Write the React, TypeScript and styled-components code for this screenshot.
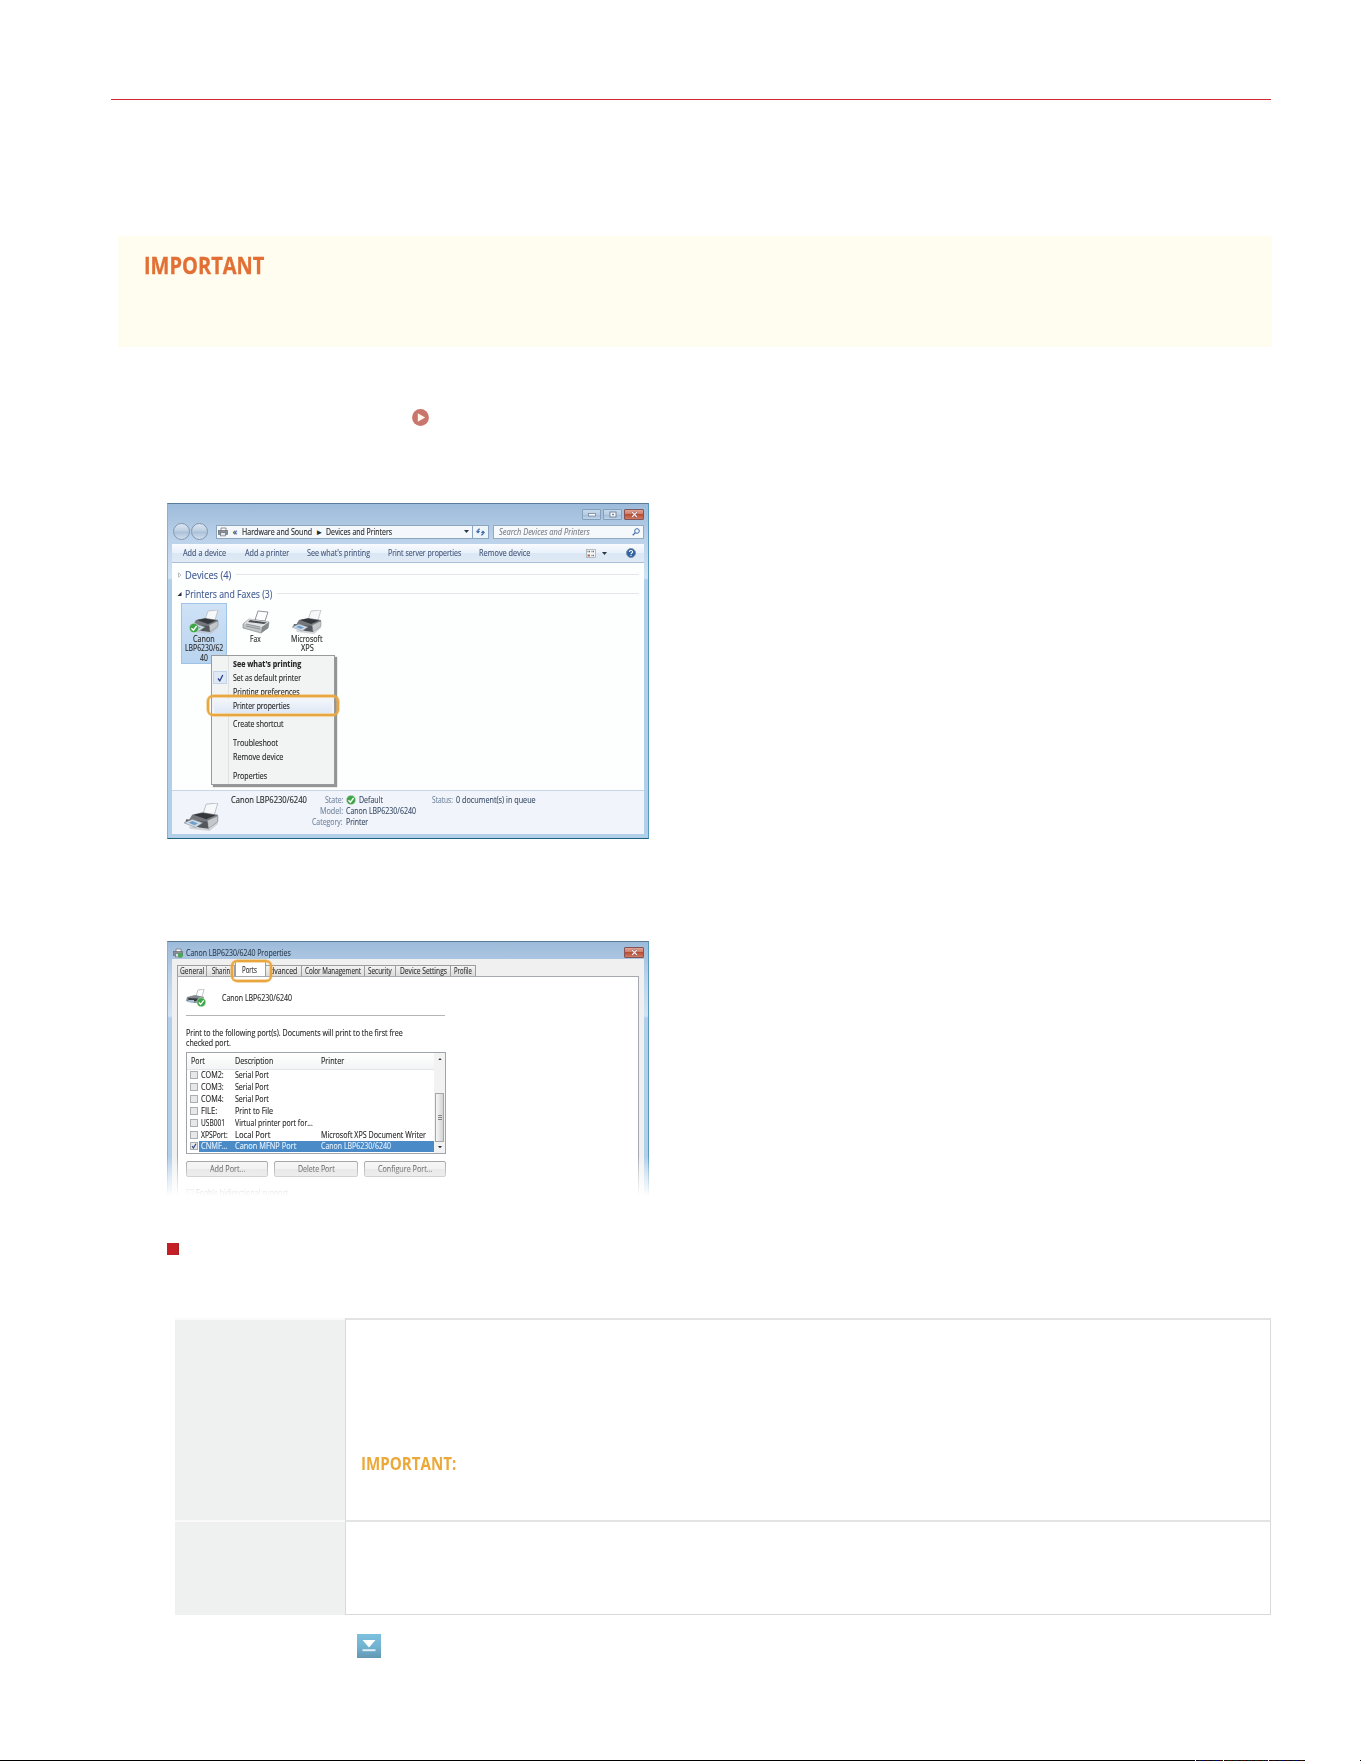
import { useLayoutEffect, useRef, useState } from "react";
import type { ReactNode } from "react";
import styled, { createGlobalStyle } from "styled-components";

const GlobalStyle = createGlobalStyle`
  *, *::before, *::after {
    box-sizing: border-box;
  }
  body {
    margin: 0;
    background: #fff;
    font-family: "Open Sans", "Noto Sans", sans-serif;
  }
  svg {
    display: block;
    flex-shrink: 0;
  }
`;

/* Text condensed to a given width, as the dialog font is narrower than ours */
const FitBox = styled.span<{ $w: number }>`
  display: block;
  flex-shrink: 0;
  width: ${(props) => props.$w}px;
  white-space: nowrap;
`;
const FitInner = styled.span`
  display: inline-block;
  vertical-align: top;
  transform-origin: 0 50%;
`;

function Fit({ w, children }: { w: number; children: ReactNode }) {
  const ref = useRef<HTMLSpanElement>(null);
  const [scale, setScale] = useState(1);

  useLayoutEffect(() => {
    if (ref.current) setScale(w / ref.current.offsetWidth);
  }, [w]);

  return (
    <FitBox $w={w}>
      <FitInner ref={ref} style={{ transform: `scaleX(${scale})` }}>
        {children}
      </FitInner>
    </FitBox>
  );
}

/* ---------- page ---------- */
const Page = styled.main`
  display: flex;
  flex-direction: column;
  width: 1361px;
  height: 1761px;
  padding: 99px 89px 0 111px;
  overflow: hidden;
`;
const Rule = styled.hr`
  width: 1160px;
  height: 1px;
  margin: 0;
  border: 0;
  background: #cf2630;
  flex-shrink: 0;
`;
const ImportantBox = styled.section`
  height: 111px;
  margin: 136px 0 0 7px;
  padding: 19px 0 0 26px;
  background: #fffcf0;
  flex-shrink: 0;
`;
const ImportantTitle = styled.h2`
  margin: 0;
  font-size: 22.5px;
  line-height: 22px;
  font-weight: 700;
  color: #e27035;
  -webkit-text-stroke: 0.3px currentColor;
`;
const PlayLink = styled.div`
  margin: 62px 0 0 301px;
  height: 17px;
  flex-shrink: 0;
`;
const SquareMark = styled.div`
  width: 12px;
  height: 12px;
  margin: 47px 0 0 56px;
  background: #c41f26;
  border-right: 1px solid #a32027;
  flex-shrink: 0;
`;
const SpecTable = styled.section`
  display: grid;
  grid-template-columns: 170px 927px;
  grid-template-rows: 202px 95px;
  margin: 63px 0 0 64px;
  flex-shrink: 0;
`;
const SpecHead = styled.div`
  background: #eff1f0;
  border-top: 2px solid #fafafa;
`;
const SpecCell = styled.div<{ $last?: boolean }>`
  padding: ${(props) => (props.$last ? 0 : "133px 0 0 15px")};
  border: 1px solid #d9d9d9;
  border-top: 2px solid #e3e3e3;
  border-bottom-width: ${(props) => (props.$last ? 1 : 0)}px;
  margin-right: 1px;
`;
const SpecNote = styled.strong`
  display: block;
  font-size: 17.5px;
  line-height: 20px;
  color: #eba93a;
`;
const JumpIcon = styled.div`
  display: flex;
  align-items: center;
  justify-content: center;
  width: 24px;
  height: 24px;
  margin: 19px 0 0 246px;
  background: linear-gradient(#7cc0df, #72b4d2 50%, #6398b4);
  flex-shrink: 0;
`;
const PageEdge = styled.div`
  height: 1px;
  margin: 102px -89px 0 -111px;
  background:
    linear-gradient(#000, #000) 0 0 / 1195px 1px no-repeat,
    repeating-linear-gradient(90deg, #102 0 3px, #500 3px 4px, #020 4px 6px, #00a 6px 7px) 1196px 0 / 27px 1px no-repeat,
    repeating-linear-gradient(90deg, #200 0 3px, #030 3px 5px, #004 5px 6px, #700 6px 7px) 1224px 0 / 44px 1px no-repeat,
    repeating-linear-gradient(90deg, #102 0 3px, #500 3px 4px, #020 4px 6px, #00a 6px 7px) 1269px 0 / 36px 1px no-repeat,
    linear-gradient(#000, #000) 1360px 0 / 1px 1px no-repeat;
  flex-shrink: 0;
`;

/* ---------- window frame ---------- */
const Window = styled.section<{ $height: number; $top: number; $faded?: boolean }>`
  position: relative;
  display: flex;
  flex-direction: column;
  width: 482px;
  height: ${(props) => props.$height}px;
  margin: ${(props) => props.$top}px 0 0 56px;
  padding: 0 4px 4px;
  background: linear-gradient(#9dbbda 0, #bad1ea 34px, #d2e3f4 74px, #b1cfe9 76px);
  border: 1px solid #8fb0cb;
  border-top-color: #5b7c99;
  border-right-color: #559bc0;
  border-bottom: ${(props) => (props.$faded ? "0" : "1px solid #1e607e")};
  font-size: 8.5px;
  line-height: 10px;
  color: #262626;
  -webkit-text-stroke: 0.12px currentColor;
  flex-shrink: 0;
  ${(props) =>
    props.$faded &&
    "mask-image: linear-gradient(#000 215px, rgba(0,0,0,.5) 232px, transparent 255px);"}
`;
const CaptionBar = styled.header<{ $height: number }>`
  display: flex;
  align-items: flex-start;
  gap: 2px;
  height: ${(props) => props.$height}px;
  padding-top: 5px;
  flex-shrink: 0;
`;
const CaptionTitle = styled.div`
  display: flex;
  align-items: center;
  gap: 3px;
  height: 10px;
  margin: 1px auto 0 1px;
  font-size: 9px;
  color: #2b3d50;
`;
const CaptionButton = styled.span<{ $close?: boolean }>`
  display: flex;
  align-items: center;
  justify-content: center;
  width: ${(props) => (props.$close ? 20 : 19)}px;
  height: 11px;
  border: 1px solid ${(props) => (props.$close ? "#81555a" : "#849fba")};
  border-radius: 1px;
  background: ${(props) =>
    props.$close
      ? "linear-gradient(#dfa292, #d17d68 45%, #bb4d35 50%, #cf7a62)"
      : "linear-gradient(#c7d9ec, #b6cce3 50%, #a3bcd8 55%, #bfd4ea)"};

  &:first-of-type {
    margin-left: auto;
  }
`;

/* ---------- devices window ---------- */
const NavRow = styled.div`
  display: flex;
  align-items: center;
  height: 13px;
  margin-bottom: 6px;
  padding-left: 1px;
  flex-shrink: 0;
`;
const RoundButton = styled.span`
  width: 17px;
  height: 17px;
  margin-right: 1px;
  border: 1px solid #8298af;
  border-radius: 50%;
  background: linear-gradient(#dce7f2, #bccee1 48%, #a9bfd7 52%, #cfe0ef);
  flex-shrink: 0;
`;
const Address = styled.div`
  display: flex;
  align-items: center;
  width: 257px;
  height: 14px;
  margin-left: 7px;
  padding-left: 1px;
  background: #f4f8fc;
  border: 1px solid #8ca4bc;

  svg:last-child {
    margin-left: auto;
    margin-right: 3px;
  }
`;
const Chevron = styled.span`
  width: 14px;
  text-align: center;
  font-size: 9px;
`;
const Refresh = styled.div`
  display: flex;
  align-items: center;
  justify-content: center;
  width: 17px;
  height: 14px;
  margin-left: -1px;
  background: #edf4fa;
  border: 1px solid #8ca4bc;
`;
const Search = styled.div`
  display: flex;
  align-items: center;
  justify-content: space-between;
  flex: 1;
  height: 14px;
  margin-left: 4px;
  padding: 0 3px 0 5px;
  background: #f6f9fc;
  border: 1px solid #94aac1;
  color: #7b8088;
  font-style: italic;
`;
const Toolbar = styled.div`
  display: flex;
  align-items: center;
  height: 19px;
  padding: 0 8px 0 11px;
  background: linear-gradient(#f9fbfe, #e9f1fa 48%, #dbe7f4 52%, #dfeaf6);
  border-bottom: 1px solid #a9bfd6;
  color: #43567a;
  flex-shrink: 0;
`;
const ToolGap = styled.span<{ $w: number }>`
  width: ${(props) => props.$w}px;
  flex-shrink: 0;
`;
const HelpIcon = styled.span`
  margin-left: auto;
`;
const Body = styled.div`
  flex: 1;
  padding: 2px 5px 0 5px;
  background: #fdfefe;
`;
const GroupTitle = styled.div`
  display: flex;
  align-items: center;
  height: 19px;
  font-size: 10.5px;
  line-height: 14px;
  color: #405a92;

  svg {
    margin-right: 3px;
  }
  &::after {
    content: "";
    flex: 1;
    height: 1px;
    margin-left: 5px;
    background: #e2e6ea;
  }
`;
const Devices = styled.div`
  display: flex;
  gap: 5.5px;
  margin-left: 4px;
`;
const Device = styled.div<{ $selected?: boolean }>`
  display: flex;
  flex-direction: column;
  align-items: center;
  width: 46px;
  height: 61px;
  padding-top: 6px;
  line-height: 9.3px;
  border: 1px solid ${(props) => (props.$selected ? "#9fc3e6" : "transparent")};
  background: ${(props) => (props.$selected ? "linear-gradient(#cfe2f6, #b9d4ef)" : "none")};

  svg {
    margin-bottom: -1px;
  }
`;
const StatusBar = styled.footer`
  display: flex;
  height: 44px;
  padding: 4px 0 0 12px;
  border-top: 1px solid #c8d5e4;
  background: #f1f5fb;
  color: #3a4c66;
  flex-shrink: 0;
`;
const StatusIcon = styled.div`
  width: 47px;
  padding-top: 8px;
`;
const StatusName = styled.div`
  width: 76px;
  color: #262626;
`;
const StatusLabels = styled.div`
  display: flex;
  flex-direction: column;
  align-items: flex-end;
  gap: 1px;
  width: 36px;
  color: #7386a0;
`;
const StatusValues = styled.div`
  display: flex;
  flex-direction: column;
  gap: 1px;
  width: 86px;
  margin-left: 3px;
`;
const StatusPair = styled.div`
  display: flex;
  gap: 3px;
  height: 10px;
`;
const Muted = styled.span`
  color: #7386a0;
`;

const Menu = styled.div`
  position: absolute;
  left: 43px;
  top: 151px;
  width: 124px;
  height: 130px;
  padding: 1px 2px;
  background: linear-gradient(90deg, transparent 16px, #dfe1e3 16px 17px, transparent 17px) #f2f3f3;
  border: 1px solid #9a9a9a;
  box-shadow: 2px 2px 1px rgba(60, 60, 60, 0.55);
  color: #222;
`;
const MenuItem = styled.div<{ $bold?: boolean; $gap?: boolean; $active?: boolean }>`
  display: flex;
  align-items: center;
  height: 13.9px;
  margin-top: ${(props) => (props.$gap ? 4.9 : 0)}px;
  padding-left: 19px;
  font-weight: ${(props) => (props.$bold ? 700 : 400)};
  background: ${(props) => (props.$active ? "linear-gradient(#f3f6fb, #dfe8f5)" : "none")};
  border-radius: 2px;
`;
const MenuCheck = styled.span`
  display: flex;
  align-items: center;
  justify-content: center;
  width: 14px;
  height: 13px;
  margin: 0 6px 0 -20px;
  background: #dfe9f5;
  border: 1px solid #c3d4e8;
`;
const Highlight = styled.span<{ $x: number; $y: number; $w: number; $h: number }>`
  position: absolute;
  left: ${(props) => props.$x}px;
  top: ${(props) => props.$y}px;
  width: ${(props) => props.$w}px;
  height: ${(props) => props.$h}px;
  border: 2px solid #e9a63f;
  border-radius: 6px;
  box-shadow: 0 0 0 0.5px #efb75c, inset 0 0 0 0.5px #efb75c;
`;

/* ---------- properties window ---------- */
const Client = styled.div`
  flex: 1;
  display: flex;
  flex-direction: column;
  padding: 5px 5px 0;
  background: #f0f0f0;
`;
const Tabs = styled.div`
  display: flex;
  align-items: flex-end;
  height: 12px;
  flex-shrink: 0;
`;
const Tab = styled.div<{ $w: number; $active?: boolean }>`
  display: flex;
  align-items: center;
  justify-content: center;
  width: ${(props) => props.$w}px;
  height: ${(props) => (props.$active ? 16 : 11)}px;
  margin-bottom: ${(props) => (props.$active ? -1 : 0)}px;
  padding-right: ${(props) => (props.$active ? 3 : 0)}px;
  border: 1px solid #9d9d9d;
  border-bottom: 0;
  border-left-width: ${(props) => (props.$active ? 1 : 0)}px;
  background: ${(props) => (props.$active ? "#fff" : "linear-gradient(#f3f3f3, #dcdcdc)")};
  color: #303030;
  overflow: hidden;

  &:first-child {
    border-left-width: 1px;
  }
`;
const TabPanel = styled.div`
  flex: 1;
  padding: 12px 8px 0;
  background: #fff;
  border: 1px solid #a5a9ae;
  border-bottom: 0;
`;
const PrinterName = styled.div`
  display: flex;
  align-items: center;
  gap: 16px;
  height: 18px;
`;
const PanelRule = styled.div`
  width: 259px;
  height: 1px;
  margin: 8px 0 12px;
  background: #b4b4b4;
`;
const PortList = styled.div`
  display: flex;
  width: 260px;
  height: 102px;
  margin-top: 4px;
  border: 1px solid #9fa4aa;
`;
const PortTable = styled.div`
  flex: 1;
`;
const PortRow = styled.div<{ $head?: boolean; $selected?: boolean }>`
  display: grid;
  grid-template-columns: ${(props) => (props.$head ? "44px 86px 1fr" : "11px 34px 86px 1fr")};
  align-items: center;
  height: ${(props) => (props.$head ? 16.5 : 11.85)}px;
  padding-left: ${(props) => (props.$head ? 4 : 3)}px;
  color: ${(props) => (props.$selected ? "#e4f0fb" : "#262626")};
  background: ${(props) => {
    if (props.$head) return "linear-gradient(#fff, #f3f4f5)";
    return props.$selected ? "linear-gradient(90deg, #fff 12px, #4a8ac6 12px)" : "none";
  }};
  border-bottom: ${(props) => (props.$head ? "1px solid #e3e5e8" : "0")};
`;
const Check = styled.span`
  display: flex;
  align-items: center;
  justify-content: center;
  width: 8px;
  height: 8px;
  border: 1px solid #aaadb1;
  background: #e6e8eb;
`;
const ScrollBar = styled.div`
  display: flex;
  flex-direction: column;
  align-items: center;
  justify-content: space-between;
  width: 11px;
  padding: 5px 0 5px;
  background: #f2f2f2;
`;
const ScrollThumb = styled.div`
  display: flex;
  align-items: center;
  justify-content: center;
  width: 9px;
  height: 49px;
  margin-top: auto;
  margin-bottom: 4px;
  border: 1px solid #a6a6a6;
  background: linear-gradient(90deg, #f6f6f6, #d3d4d5);
`;
const PortButtons = styled.div`
  display: grid;
  grid-template-columns: 82px 84px 82px;
  gap: 6px;
  margin-top: 7px;
`;
const PortButton = styled.div`
  display: flex;
  align-items: center;
  justify-content: center;
  height: 16px;
  border: 1px solid #969696;
  border-radius: 2px;
  background: linear-gradient(#f4f4f4, #ebebeb 50%, #dadada 52%, #d6d6d6);
`;
const Bidirectional = styled.div`
  display: flex;
  align-items: center;
  gap: 2px;
  margin-top: 11px;
`;

function Badge() {
  return (
    <g>
      <circle cx="5" cy="5" r="4.7" fill="#3fa548" stroke="#d8ead9" strokeWidth=".6" />
      <path d="M2.4 5.2 4.4 7.2 7.6 3" fill="none" stroke="#fff" strokeWidth="1.4" />
    </g>
  );
}

function PrinterIcon({ width = 30, checked = false }: { width?: number; checked?: boolean }) {
  return (
    <svg width={width} height={(width * 25) / 30} viewBox="0 0 30 25">
      <path d="M4 20 22 22 29 15 29 18 22 24 5 22z" fill="#b9bcc0" opacity=".6" />
      <path d="M16 10 19 1 29 0 26 10z" fill="#f7f8f9" stroke="#a7abb0" strokeWidth=".6" />
      <path d="M7 10 16 8 29 10 29 15 20 19 4 15z" fill="#74787d" />
      <path d="M8 10 16 8.5 27 10.5 19 14z" fill="#34383d" />
      <path d="M20 15 29 11 29 16 21 22z" fill="#c5c8ca" stroke="#7d8185" strokeWidth=".5" />
      <path d="M2 14 20 16 21 22 13 21 1 17z" fill="#54585d" />
      <path d="M0 17 7 14 16 17 10 21z" fill="#d2dbe4" stroke="#7d8894" strokeWidth=".5" />
      <path d="M4 17 7 15.5 12 17.5 9 19z" fill="#6fa0cb" />
      {checked && (
        <g transform="translate(0 13)">
          <Badge />
        </g>
      )}
    </svg>
  );
}

/* simplified printer for the 10px address and caption bars */
function SmallPrinterIcon({ checked = false }: { checked?: boolean }) {
  return (
    <svg width="10" height="10" viewBox="0 0 10 10">
      <path d="M3 4V1H8V4" fill="#fafbfc" stroke="#7f858c" strokeWidth=".9" />
      <rect x=".5" y="3.6" width="9" height="3.8" fill="#8a9097" stroke="#666c73" strokeWidth=".7" />
      <rect x="2.5" y="5.5" width="5" height="3.4" fill="#dfe6ed" stroke="#6d747b" strokeWidth=".7" />
      {checked && <circle cx="7.4" cy="7.2" r="2.5" fill="#4aa653" />}
    </svg>
  );
}

function FaxIcon() {
  return (
    <svg width="30" height="25" viewBox="0 0 30 25">
      <path d="M14 10 17 1 27 2 24 11z" fill="#fcfcfc" stroke="#777b80" strokeWidth=".8" />
      <path d="M2 14 8 9 28 12 27 18 20 23 2 18z" fill="#c1c4c6" stroke="#777a7e" strokeWidth=".6" />
      <path d="M8 9 28 12 21 17 3 14z" fill="#e0e2e3" />
      <path d="M9 10 26 12.5 23 14 7 12z" fill="#4c5055" />
      <path d="M5 14 19 17M5 16 19 19" stroke="#8b8e92" strokeWidth=".9" />
      <path d="M21 17 28 12 27 18 20 23z" fill="#85898c" />
    </svg>
  );
}

function CloseGlyph() {
  return (
    <svg width="7" height="7" viewBox="0 0 7 7">
      <path d="M1 1 6 6M6 1 1 6" stroke="#7b4a47" strokeWidth="2.4" />
      <path d="M1 1 6 6M6 1 1 6" stroke="#f5ebe9" strokeWidth="1.3" />
    </svg>
  );
}

function Arrow({ up = false, size = 5 }: { up?: boolean; size?: number }) {
  return (
    <svg width={size} height={size * 0.6} viewBox="0 0 5 3">
      <path d={up ? "M0 3 2.5 0 5 3z" : "M0 0 2.5 3 5 0z"} fill="#2d3540" />
    </svg>
  );
}

const ports = [
  { name: "COM2:", w: 23, kind: "Serial Port", kw: 34 },
  { name: "COM3:", w: 23, kind: "Serial Port", kw: 34 },
  { name: "COM4:", w: 23, kind: "Serial Port", kw: 34 },
  { name: "FILE:", w: 16, kind: "Print to File", kw: 38 },
  { name: "USB001", w: 24, kind: "Virtual printer port for...", kw: 78 },
  { name: "XPSPort:", w: 27, kind: "Local Port", kw: 35, printer: "Microsoft XPS Document Writer", pw: 105 },
  { name: "CNMF...", w: 27, kind: "Canon MFNP Port", kw: 61, printer: "Canon LBP6230/6240", pw: 70, checked: true },
];

function DevicesWindow() {
  return (
    <Window $height={336} $top={77}>
      <CaptionBar $height={21}>
        <CaptionButton>
          <svg width="8" height="4" viewBox="0 0 8 4">
            <rect x=".5" y=".5" width="7" height="2.5" fill="#fff" stroke="#71869d" strokeWidth=".8" />
          </svg>
        </CaptionButton>
        <CaptionButton>
          <svg width="8" height="7" viewBox="0 0 8 7">
            <rect x="1" y="1" width="6" height="5" fill="#fff" stroke="#71869d" />
            <rect x="3" y="2.7" width="2" height="1.6" fill="#71869d" />
          </svg>
        </CaptionButton>
        <CaptionButton $close>
          <CloseGlyph />
        </CaptionButton>
      </CaptionBar>
      <NavRow>
        <RoundButton />
        <RoundButton />
        <Address>
          <SmallPrinterIcon />
          <Chevron>«</Chevron>
          <Fit w={70}>Hardware and Sound</Fit>
          <Chevron>▸</Chevron>
          <Fit w={66}>Devices and Printers</Fit>
          <Arrow />
        </Address>
        <Refresh>
          <svg width="9" height="8" viewBox="0 0 9 8">
            <path d="M4 1C2 1 1.5 2.5 2 4.5M.5 3 2 4.6 3.5 3M5 7C7 7 7.5 5.5 7 3.5M5.5 5 7 3.4 8.5 5" fill="none" stroke="#3f6cab" strokeWidth="1.2" />
          </svg>
        </Refresh>
        <Search>
          <Fit w={91}>Search Devices and Printers</Fit>
          <svg width="8" height="8" viewBox="0 0 8 8">
            <circle cx="5" cy="3" r="2.3" fill="none" stroke="#3f6cab" />
            <path d="M3.4 4.6.7 7.3" stroke="#3f6cab" strokeWidth="1.3" />
          </svg>
        </Search>
      </NavRow>
      <Toolbar>
        <Fit w={43}>Add a device</Fit>
        <ToolGap $w={18.5} />
        <Fit w={44}>Add a printer</Fit>
        <ToolGap $w={18} />
        <Fit w={63}>See what's printing</Fit>
        <ToolGap $w={18} />
        <Fit w={73}>Print server properties</Fit>
        <ToolGap $w={18} />
        <Fit w={51}>Remove device</Fit>
        <ToolGap $w={56} />
        <svg width="10" height="9" viewBox="0 0 10 9">
          <rect x=".5" y=".5" width="9" height="8" fill="#f4f5f6" stroke="#9da5ad" strokeWidth=".7" />
          <path d="M1.5 2.5H4M5.5 2.5H8.5M5.5 6.5H8.5" stroke="#69737e" strokeWidth="1.6" strokeDasharray="1 .5" />
          <path d="M1.5 6.5H4" stroke="#b26a52" strokeWidth="2" />
        </svg>
        <ToolGap $w={6} />
        <Arrow />
        <HelpIcon>
          <svg width="10" height="10" viewBox="0 0 10 10">
            <circle cx="5" cy="5" r="4.5" fill="#2d62a4" stroke="#7c91aa" />
            <path d="M3.4 4C3.4 2 6.6 2 6.6 3.9 6.6 5 5 4.9 5 6.2M5 7V8" fill="none" stroke="#fff" strokeWidth="1.1" />
          </svg>
        </HelpIcon>
      </Toolbar>
      <Body>
        <GroupTitle>
          <svg width="5" height="6" viewBox="0 0 5 6">
            <path d="M1.5.8 4 3 1.5 5.2z" fill="#fff" stroke="#a1a5aa" strokeWidth=".7" />
          </svg>
          <Fit w={46}>Devices (4)</Fit>
        </GroupTitle>
        <GroupTitle>
          <svg width="5" height="6" viewBox="0 0 5 6">
            <path d="M4.5 1V5H.5z" fill="#252a30" />
          </svg>
          <Fit w={87}>Printers and Faxes (3)</Fit>
        </GroupTitle>
        <Devices>
          <Device $selected>
            <PrinterIcon checked />
            <Fit w={22}>Canon</Fit>
            <Fit w={38}>LBP6230/62</Fit>
            <Fit w={8}>40</Fit>
          </Device>
          <Device>
            <FaxIcon />
            <Fit w={11}>Fax</Fit>
          </Device>
          <Device>
            <PrinterIcon />
            <Fit w={32}>Microsoft</Fit>
            <Fit w={13}>XPS</Fit>
          </Device>
        </Devices>
      </Body>
      <StatusBar>
        <StatusIcon>
          <PrinterIcon width={35} />
        </StatusIcon>
        <StatusName>
          <Fit w={76}>Canon LBP6230/6240</Fit>
        </StatusName>
        <StatusLabels>
          <Fit w={18}>State:</Fit>
          <Fit w={23}>Model:</Fit>
          <Fit w={31}>Category:</Fit>
        </StatusLabels>
        <StatusValues>
          <StatusPair>
            <svg width="10" height="10" viewBox="0 0 10 10">
              <Badge />
            </svg>
            <Fit w={24}>Default</Fit>
          </StatusPair>
          <Fit w={70}>Canon LBP6230/6240</Fit>
          <Fit w={22}>Printer</Fit>
        </StatusValues>
        <StatusPair>
          <Muted>
            <Fit w={21}>Status:</Fit>
          </Muted>
          <Fit w={80}>0 document(s) in queue</Fit>
        </StatusPair>
      </StatusBar>
      <Menu>
        <MenuItem $bold>
          <Fit w={68}>See what's printing</Fit>
        </MenuItem>
        <MenuItem>
          <MenuCheck>
            <svg width="7" height="8" viewBox="0 0 7 8">
              <path d="M1 4.5 2.8 6.8 5.8 1" fill="none" stroke="#283f8a" strokeWidth="1.3" />
            </svg>
          </MenuCheck>
          <Fit w={68}>Set as default printer</Fit>
        </MenuItem>
        <MenuItem>
          <Fit w={67}>Printing preferences</Fit>
        </MenuItem>
        <MenuItem $active>
          <Fit w={57}>Printer properties</Fit>
        </MenuItem>
        <MenuItem $gap>
          <Fit w={51}>Create shortcut</Fit>
        </MenuItem>
        <MenuItem $gap>
          <Fit w={45}>Troubleshoot</Fit>
        </MenuItem>
        <MenuItem>
          <Fit w={50}>Remove device</Fit>
        </MenuItem>
        <MenuItem $gap>
          <Fit w={34}>Properties</Fit>
        </MenuItem>
      </Menu>
      <Highlight $x={39} $y={191} $w={132} $h={21} />
    </Window>
  );
}

function PropertiesWindow() {
  return (
    <Window $height={255} $top={102} $faded>
      <CaptionBar $height={17}>
        <CaptionTitle>
          <SmallPrinterIcon checked />
          <Fit w={105}>Canon LBP6230/6240 Properties</Fit>
        </CaptionTitle>
        <CaptionButton $close>
          <CloseGlyph />
        </CaptionButton>
      </CaptionBar>
      <Client>
        <Tabs>
          <Tab $w={30}>
            <Fit w={24}>General</Fit>
          </Tab>
          <Tab $w={28}>
            <Fit w={18}>Sharin</Fit>
          </Tab>
          <Tab $w={31} $active>
            <Fit w={15}>Ports</Fit>
          </Tab>
          <Tab $w={36}>
            <Fit w={27}>dvanced</Fit>
          </Tab>
          <Tab $w={63}>
            <Fit w={56}>Color Management</Fit>
          </Tab>
          <Tab $w={31}>
            <Fit w={24}>Security</Fit>
          </Tab>
          <Tab $w={55}>
            <Fit w={47}>Device Settings</Fit>
          </Tab>
          <Tab $w={25}>
            <Fit w={18}>Profile</Fit>
          </Tab>
        </Tabs>
        <TabPanel>
          <PrinterName>
            <svg width="20" height="18" viewBox="0 0 20 18">
              <path d="M10 7 12 1 18 0 16 8z" fill="#fff" stroke="#a8adb2" strokeWidth=".7" />
              <path d="M1 8 9 6 18 8 17 14 8 14 0 12z" fill="#858a8f" />
              <path d="M2 9 12 9.5 12 12 3 12z" fill="#363b40" />
              <path d="M3 11 8 11 8 14 1 13z" fill="#a6bdd3" />
              <g transform="translate(10.5 8.5) scale(.95)">
                <Badge />
              </g>
            </svg>
            <Fit w={70}>Canon LBP6230/6240</Fit>
          </PrinterName>
          <PanelRule />
          <Fit w={217}>Print to the following port(s). Documents will print to the first free</Fit>
          <Fit w={45}>checked port.</Fit>
          <PortList>
            <PortTable>
              <PortRow $head>
                <Fit w={14}>Port</Fit>
                <Fit w={38}>Description</Fit>
                <Fit w={23}>Printer</Fit>
              </PortRow>
              {ports.map((port) => (
                <PortRow key={port.name} $selected={port.checked}>
                  <Check>
                    {port.checked && (
                      <svg width="6" height="6" viewBox="0 0 6 6">
                        <path d="M1 3 2.4 5 5 .8" fill="none" stroke="#33457d" strokeWidth="1.2" />
                      </svg>
                    )}
                  </Check>
                  <Fit w={port.w}>{port.name}</Fit>
                  <Fit w={port.kw}>{port.kind}</Fit>
                  {port.printer && <Fit w={port.pw}>{port.printer}</Fit>}
                </PortRow>
              ))}
            </PortTable>
            <ScrollBar>
              <Arrow up size={4} />
              <ScrollThumb>
                <svg width="4" height="5" viewBox="0 0 4 5">
                  <path d="M0 .5H4M0 2.5H4M0 4.5H4" stroke="#77797c" strokeWidth=".9" />
                </svg>
              </ScrollThumb>
              <Arrow size={4} />
            </ScrollBar>
          </PortList>
          <PortButtons>
            <PortButton>
              <Fit w={35}>Add Port...</Fit>
            </PortButton>
            <PortButton>
              <Fit w={37}>Delete Port</Fit>
            </PortButton>
            <PortButton>
              <Fit w={54}>Configure Port...</Fit>
            </PortButton>
          </PortButtons>
          <Bidirectional>
            <Check />
            <Fit w={92}>Enable bidirectional support</Fit>
          </Bidirectional>
        </TabPanel>
      </Client>
      <Highlight $x={63} $y={18} $w={41} $h={22} />
    </Window>
  );
}

function App() {
  return (
    <>
      <GlobalStyle />
      <Page>
        <Rule />
        <ImportantBox>
          <ImportantTitle>
            <Fit w={120}>IMPORTANT</Fit>
          </ImportantTitle>
        </ImportantBox>
        <PlayLink>
          <svg width="17" height="17" viewBox="0 0 17 17">
            <circle cx="8.5" cy="8.5" r="8.4" fill="#c9766c" />
            <path d="M5.8 4.3 13.2 8.5 5.8 12.7z" fill="#fff7ec" />
          </svg>
        </PlayLink>
        <DevicesWindow />
        <PropertiesWindow />
        <SquareMark />
        <SpecTable>
          <SpecHead />
          <SpecCell>
            <SpecNote>
              <Fit w={95}>IMPORTANT:</Fit>
            </SpecNote>
          </SpecCell>
          <SpecHead />
          <SpecCell $last />
        </SpecTable>
        <JumpIcon>
          <svg width="14" height="12" viewBox="0 0 14 12">
            <path d="M.5 0H13.5L7 7.5z" fill="#fff" />
            <rect x=".5" y="9.2" width="13" height="2" fill="#dceef6" />
          </svg>
        </JumpIcon>
        <PageEdge />
      </Page>
    </>
  );
}

export default App;
